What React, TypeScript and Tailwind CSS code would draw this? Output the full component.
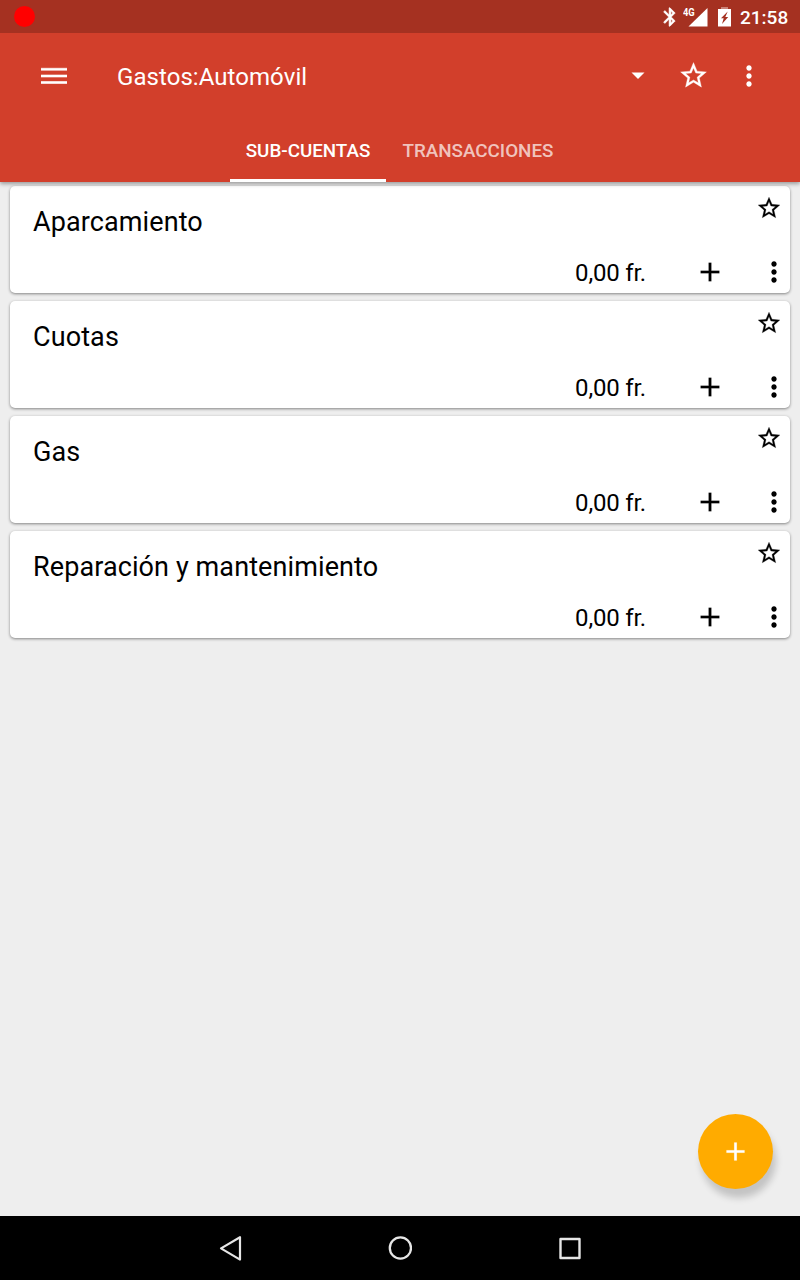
import type { ReactNode } from "react";

const accounts = ["Aparcamiento", "Cuotas", "Gas", "Reparación y mantenimiento"];

function Icon({ className, children }: { className: string; children: ReactNode }) {
  return (
    <svg viewBox="0 0 24 24" fill="currentColor" className={`block shrink-0 ${className}`}>
      {children}
    </svg>
  );
}

const Star = ({ className }: { className: string }) => (
  <Icon className={className}>
    <path
      stroke="currentColor"
      strokeWidth=".25"
      d="M22 9.24l-7.19-.62L12 2 9.19 8.63 2 9.24l5.46 4.73L5.82 21 12 17.27 18.18 21l-1.63-7.03L22 9.24zM12 15.4l-3.76 2.27 1-4.28-3.32-2.88 4.38-.38L12 6.1l1.71 4.04 4.38.38-3.32 2.88 1 4.28L12 15.4z"
    />
  </Icon>
);

const More = ({ className }: { className: string }) => (
  <Icon className={className}>
    <path d="M12 8c1.1 0 2-.9 2-2s-.9-2-2-2-2 .9-2 2 .9 2 2 2zm0 2c-1.1 0-2 .9-2 2s.9 2 2 2 2-.9 2-2-.9-2-2-2zm0 6c-1.1 0-2 .9-2 2s.9 2 2 2 2-.9 2-2-.9-2-2-2z" />
  </Icon>
);

const Plus = ({ className }: { className: string }) => (
  <Icon className={className}>
    <path d="M19 13h-6v6h-2v-6H5v-2h6V5h2v6h6z" stroke="currentColor" strokeWidth=".1" />
  </Icon>
);

function StatusBar() {
  return (
    <div className="flex h-[33px] items-center bg-[#a53121] pl-[13.5px] pr-[11px]">
      <svg viewBox="0 0 21 21" className="block size-[21px]">
        <circle cx="10.5" cy="10.5" r="10.5" fill="#ff0000" />
      </svg>
      <div className="ml-auto flex items-center">
        <Icon className="mr-[2px] size-[22px]">
          <path
            stroke="currentColor"
            strokeWidth=".6"
            d="M17.71 7.71L12 2h-1v7.59L6.41 5 5 6.41 10.59 12 5 17.59 6.41 19 11 14.41V22h1l5.71-5.71-4.3-4.29 4.3-4.29zM13 5.83l1.88 1.88L13 9.59V5.83zm1.88 10.46L13 18.17v-3.76l1.88 1.88z"
          />
        </Icon>
        <div className="relative mr-[10px] h-[20px] w-[25px]">
          <span className="absolute left-0 top-0 origin-left scale-x-85 text-[11px] font-bold leading-[11px]">4G</span>
          <svg viewBox="0 0 25 20" fill="currentColor" className="block h-[20px] w-[25px]">
            <path d="M24.5 1v18.5H5.5z" />
          </svg>
        </div>
        <svg viewBox="0 0 13 20" className="mr-[9px] block h-[20px] w-[13px]">
          <path d="M3 0h7v2.5H3z" fill="#c98379" />
          <path d="M0 2h13v17.5H0z" fill="currentColor" />
          <path d="M9.7 4.5L3 11.2h2.7L4 17l6.2-7H7.3z" fill="#a53121" />
        </svg>
        <span className="mt-[2px] w-[49px] text-[19px] font-medium leading-[24px]">21:58</span>
      </div>
    </div>
  );
}

function Toolbar() {
  return (
    <div className="flex h-[85px] items-center pl-[41px] pr-[35px]">
      <svg viewBox="0 0 26 18" fill="currentColor" className="block h-[18px] w-[26px]">
        <path d="M0 .7h26v1H0zM0 2.7h26v1H0zM0 7.4h26v1H0zM0 9.4h26v1H0zM0 14.1h26v1H0zM0 16.1h26v1H0z" opacity=".6" />
        <path d="M0 1.2h26v2H0zM0 7.9h26v2H0zM0 14.6h26v2H0z" />
      </svg>
      <h1 className="ml-[50px] mt-[3px] text-[24px] leading-[32px] tracking-[0.06px]">Gastos:Automóvil</h1>
      <div className="ml-auto flex items-center">
        <svg viewBox="0 0 14 8" fill="currentColor" className="mr-[33px] block h-[8px] w-[14px]">
          <path d="M.5.5h13L7 7z" />
        </svg>
        <Star className="mr-[24px] size-[31px]" />
        <More className="size-[32px]" />
      </div>
    </div>
  );
}

function Tabs() {
  return (
    <div className="flex h-[64px] justify-center text-[18.8px] font-medium">
      <div className="flex w-[156px] items-center justify-center border-b-3 border-white pt-[5px]">SUB-CUENTAS</div>
      <div className="flex w-[184px] items-center justify-center pt-[2px] text-white/70">TRANSACCIONES</div>
    </div>
  );
}

function AccountCard({ name }: { name: string }) {
  return (
    <div className="flex h-[107px] flex-col justify-between rounded-[5px] bg-white pl-[23px] shadow-[0_1px_3px_rgba(0,0,0,0.45)]">
      <div className="flex justify-between pr-[8.5px]">
        <h2 className="mt-[20px] text-[27px] leading-[32px] tracking-[0.1px]">{name}</h2>
        <Star className="mt-[9px] size-[26px]" />
      </div>
      <div className="mb-[5px] flex items-center justify-end">
        <span className="mr-[48px] mt-[2px] text-[24px] leading-[30px] tracking-[-0.2px]">0,00 fr.</span>
        <Plus className="mr-[32px] size-[32px]" />
        <More className="size-[32px]" />
      </div>
    </div>
  );
}

export default function App() {
  return (
    <div className="relative flex h-[1280px] w-[800px] flex-col overflow-hidden bg-[#eeeeee] font-['Roboto',sans-serif] text-black">
      <header className="relative z-10 bg-[#d23f2b] text-white shadow-[0_2px_4px_rgba(0,0,0,0.35)]">
        <StatusBar />
        <Toolbar />
        <Tabs />
      </header>
      <main className="flex flex-1 flex-col gap-2 px-[10px] pt-[4px]">
        {accounts.map((name) => (
          <AccountCard key={name} name={name} />
        ))}
      </main>
      <button
        aria-label="+"
        className="absolute bottom-[91px] right-[27px] flex size-[75px] items-center justify-center rounded-full bg-[#ffab00] text-white shadow-[3px_9px_7px_rgba(0,0,0,0.18)]"
      >
        <Plus className="size-[31px]" />
      </button>
      <nav className="flex h-[64px] items-center justify-between bg-black px-[218px] text-[#e6e6e6]">
        <svg viewBox="0 0 24 26" fill="none" stroke="currentColor" strokeWidth="2.2" strokeLinejoin="round" className="block h-[26px] w-[24px]">
          <path d="M22 2.2v22.4L3 13.4z" />
        </svg>
        <svg viewBox="0 0 24 24" fill="none" stroke="currentColor" strokeWidth="2.3" className="block size-[24px]">
          <circle cx="12.4" cy="12" r="10.6" />
        </svg>
        <svg viewBox="0 0 24 24" fill="none" stroke="currentColor" strokeWidth="2.4" strokeLinejoin="round" className="block size-[24px]">
          <path d="M2.5 3h19v19h-19z" />
        </svg>
      </nav>
    </div>
  );
}
